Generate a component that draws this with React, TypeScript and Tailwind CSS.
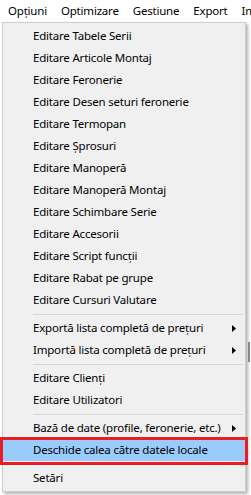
import React from "react";

type Item =
  | { kind: "item"; label: string; sub?: boolean; hl?: boolean }
  | { kind: "sep" };

const items: Item[] = [
  { kind: "item", label: "Editare Tabele Serii" },
  { kind: "item", label: "Editare Articole Montaj" },
  { kind: "item", label: "Editare Feronerie" },
  { kind: "item", label: "Editare Desen seturi feronerie" },
  { kind: "item", label: "Editare Termopan" },
  { kind: "item", label: "Editare Șprosuri" },
  { kind: "item", label: "Editare Manoperă" },
  { kind: "item", label: "Editare Manoperă Montaj" },
  { kind: "item", label: "Editare Schimbare Serie" },
  { kind: "item", label: "Editare Accesorii" },
  { kind: "item", label: "Editare Script funcții" },
  { kind: "item", label: "Editare Rabat pe grupe" },
  { kind: "item", label: "Editare Cursuri Valutare" },
  { kind: "sep" },
  { kind: "item", label: "Exportă lista completă de prețuri", sub: true },
  { kind: "item", label: "Importă lista completă de prețuri", sub: true },
  { kind: "sep" },
  { kind: "item", label: "Editare Clienți" },
  { kind: "item", label: "Editare Utilizatori" },
  { kind: "sep" },
  { kind: "item", label: "Bază de date (profile, feronerie, etc.)", sub: true },
  { kind: "item", label: "Deschide calea către datele locale", hl: true },
  { kind: "sep" },
  { kind: "item", label: "Setări" },
];

function Arrow() {
  return (
    <svg width="4" height="7" viewBox="0 0 4 7" className="absolute right-[9px] top-[8px]">
      <path d="M0 0 L4 3.5 L0 7 Z" fill="#000" />
    </svg>
  );
}

export default function App() {
  return (
    <div
      className="relative w-[251px] h-[495px] bg-white overflow-hidden text-[11.5px] tracking-[-0.2px] text-black"
      style={{ fontFamily: '"Noto Sans", "Open Sans", sans-serif' }}
    >
      <div className="flex h-[22px] items-center pl-[1px] whitespace-nowrap overflow-hidden">
        <div className="px-[7px] shrink-0">Opțiuni</div>
        <div className="px-[7px] shrink-0">Optimizare</div>
        <div className="px-[7px] shrink-0">Gestiune</div>
        <div className="px-[7px] shrink-0">Export</div>
        <div className="pl-[7px] shrink-0 w-[20px] overflow-hidden">Import</div>
      </div>
      <div className="ml-[2px] w-[244px] border border-[#cccccc] bg-[#f0f0f0] py-[2px] shadow-[2px_2px_3px_rgba(0,0,0,0.3)]">
        {items.map((it, i) =>
          it.kind === "sep" ? (
            <div key={i} className="h-[6px] flex items-center pl-[30px] pr-[2px]">
              <div className="h-px w-full bg-[#d7d7d7]" />
            </div>
          ) : (
            <div
              key={i}
              className={
                "relative h-[22px] flex items-center pl-[30px] whitespace-nowrap " +
                (it.hl ? "bg-[#99ccfa]" : "")
              }
            >
              {it.label}
              {it.sub ? <Arrow /> : null}
              {it.hl ? (
                <div className="absolute left-[-3px] right-[-3px] top-[-2px] bottom-[-4px] border-[3px] border-[#ea1c24]" />
              ) : null}
            </div>
          )
        )}
      </div>
      <div className="absolute left-[248px] top-[342px] w-[2px] h-[20px] bg-[#888888]" />
    </div>
  );
}
